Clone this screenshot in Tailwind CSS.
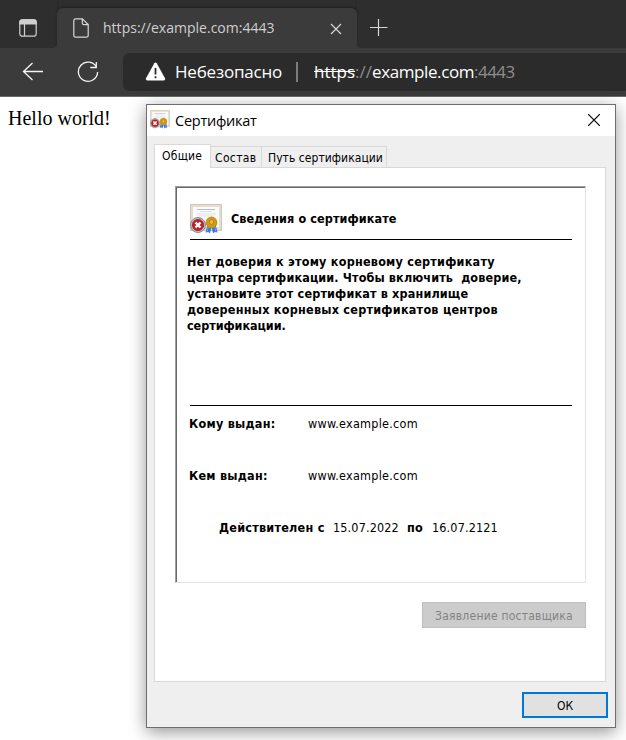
<!DOCTYPE html>
<html lang="ru">
<head>
<meta charset="utf-8">
<title>https://example.com:4443</title>
<script src="https://cdn.jsdelivr.net/npm/@tailwindcss/browser@4"></script>
</head>
<body class="relative h-[740px] w-[626px] overflow-hidden bg-white">
<svg class="hidden">
  <symbol id="cert" viewBox="0 0 32 32">
    <rect x="0.5" y="0.5" width="31" height="26" fill="#e4ddd0" stroke="#cfc7b9"/>
    <rect x="3" y="3" width="26" height="20" fill="#fcfbf9"/>
    <path d="M7 5.500h18" stroke="#b4bbdc"/>
    <path d="M10 7.500h12M6 10h20M8 12h16" stroke="#dfe1ed"/>
    <path d="M17.500 20l-2 8.500 2.800-.500 1.700 1.500 1.500-7zM25.500 20l2 8.500-2.800-.500-1.700 1.500-1.500-7z" fill="#3478e0"/>
    <path d="M18.200 23l-1 4.500M24.800 23l1 4.500" stroke="#71a9f5"/>
    <circle cx="21.500" cy="18.500" r="5.700" fill="#d19a17"/>
    <circle cx="21.500" cy="18.500" r="5.300" fill="none" stroke="#c0870c" stroke-width=".8"/>
    <circle cx="21.500" cy="18" r="2.300" fill="#e6bb45" stroke="#b07c10" stroke-width=".8"/>
    <circle cx="8" cy="21" r="7.500" fill="#bdbdbd" stroke="#8b8b8b"/>
    <circle cx="8" cy="21" r="5.600" fill="#c5202a" stroke="#98202a" stroke-width=".8"/>
    <path d="M5.500 18.500l5 5M10.500 18.500l-5 5" stroke="#fff" stroke-width="2.400"/>
  </symbol>
</svg>

<header class="h-[97px] border-b border-[#6a6a6a] bg-[#3b3b3b] font-['Open_Sans','Noto_Sans',sans-serif]">
  <div class="flex h-12 bg-[linear-gradient(#2e2e2e_20px,#3b3b3b_20px)]">
    <div class="h-12 w-[57px] shrink-0 rounded-br-md bg-[#2e2e2e] pt-[19px] pl-[19px] shadow-[0_0_2px_#202020]">
      <svg width="18" height="18" viewBox="0 0 18 18" fill="none" stroke="#cfcfcf" stroke-width="1.200"><path d="M.8 5V3.300A2.500 2.500 0 0 1 3.300.8h11.400a2.500 2.500 0 0 1 2.500 2.500V5z" fill="#cfcfcf"/><rect x=".8" y=".8" width="16.400" height="16.400" rx="2.500"/><path d="M5.500 5v12"/></svg>
    </div>
    <div class="relative mt-2 flex h-10 w-[300px] shrink-0 items-start rounded-t-md bg-[#3b3b3b] shadow-[0_-1px_2px_#202020]">
      <svg class="mt-[10px] ml-4 shrink-0" width="16" height="20" viewBox="0 0 16 20" fill="none" stroke="#d6d6d6" stroke-width="1.200"><path d="M2.600.8h6.800l5.800 5.800v10.800a1.800 1.800 0 0 1-1.800 1.800H2.600a1.800 1.800 0 0 1-1.800-1.800V2.600A1.800 1.800 0 0 1 2.600.8z"/><path d="M9.300.8v4.300q0 1.600 1.600 1.600h4.300"/></svg>
      <span class="mt-[9px] ml-[14px] text-[14px] leading-[22px] tracking-[0.02px] whitespace-pre text-[#cfcfcf]">https://example.com:4443</span>
      <svg class="mt-[15px] mr-[15px] ml-auto" width="12" height="12" stroke="#d6d6d6" stroke-width="1.200"><path d="M1 1l10 10M11 1L1 11"/></svg>
    </div>
    <div class="h-12 grow rounded-bl-md bg-[#2e2e2e] pt-[19px] pl-[13px] shadow-[0_0_2px_#202020]">
      <svg width="18" height="18" stroke="#d6d6d6" stroke-width="1.200"><path d="M8.500 0v17M0 8.500h17.500"/></svg>
    </div>
  </div>
  <div class="relative flex h-12 items-start bg-[#3b3b3b]">
    <svg class="mt-[14px] ml-[22px]" width="22" height="19" fill="none" stroke="#f4f4f4" stroke-width="1.300"><path d="M1 9.500h20M10.500 1L1.500 9.500l9 8.500"/></svg>
    <svg class="mt-[13px] ml-[33px]" width="22" height="22" fill="none" stroke="#f4f4f4" stroke-width="1.300"><path d="M19.500 6.200A9.600 9.600 0 1 0 20.600 11M19.300 1v5.500h-6"/></svg>
    <div class="mt-[5px] ml-6 flex h-[38px] w-[503px] items-start rounded-l-md bg-[#2b2b2b] text-[17px] leading-[24px] text-white">
      <svg class="mt-[9px] ml-[22px] shrink-0" width="21" height="19"><path d="M9.300 1.200q1.200-1.600 2.400 0l8.300 15q.7 2-1.300 2.200H2.300q-2-.2-1.300-2.200z" fill="#fff"/><path d="M10.500 6v6.500M10.500 14.300v2" stroke="#2b2b2b" stroke-width="1.800"/></svg>
      <span class="mt-[7px] ml-[9px] w-[110px] shrink-0 tracking-[-0.2px] whitespace-pre">Небезопасно</span>
      <span class="mt-[9px] ml-[11px] h-5 w-[2px] bg-[#7c7c7c]"></span>
      <span class="mt-[7px] ml-[16px] whitespace-pre"><s>https</s><span class="text-[#8d8d8d]">://</span><span class="tracking-[-0.4px]">example.com</span><span class="tracking-[-0.55px] text-[#8d8d8d]">:4443</span></span>
    </div>
  </div>
</header>

<p class="pt-[9px] pl-2 font-['Liberation_Serif',serif] text-[20px] leading-[25px] text-black">Hello world!</p>

<div class="absolute top-[104px] left-[146px] flex h-[624px] w-[470px] flex-col border border-[#6e6e6e] bg-[#efefef] font-['DejaVu_Sans_Condensed','DejaVu_Sans',sans-serif] text-[12px] leading-4 text-black shadow-[0_4px_16px_rgba(0,0,0,.42)]">
  <div class="flex h-[31px] shrink-0 items-start bg-white">
    <svg class="mt-[5px] ml-[3px]" width="20" height="20"><use href="#cert"/></svg>
    <span class="mt-[5px] ml-[5px] font-['Open_Sans','Noto_Sans',sans-serif] text-[14.5px] leading-[22px] tracking-[-0.25px] whitespace-pre">Сертификат</span>
    <svg class="mt-[9px] mr-[15px] ml-auto" width="12" height="12" stroke="#000" stroke-width="1.200"><path d="M0 0l12 12M12 0L0 12"/></svg>
  </div>
  <div class="relative z-10 ml-[7px] flex h-8 shrink-0 items-end">
    <div class="h-[24px] w-[57px] border border-b-0 border-[#d9d9d9] bg-white pt-[3px] pl-[7px] tracking-[0.25px] whitespace-pre">Общие</div>
    <div class="h-[22px] w-[51px] border-t border-r border-b border-[#d9d9d9] pt-[3px] pl-[4px] tracking-[0.35px] whitespace-pre">Состав</div>
    <div class="h-[22px] w-[125px] border-t border-r border-b border-[#d9d9d9] pt-[3px] pl-[6px] tracking-[0.05px] whitespace-pre">Путь сертификации</div>
  </div>
  <div class="-mt-px ml-[7px] flex h-[515px] w-[452px] shrink-0 flex-col border border-[#d9d9d9] bg-white pt-[18px] pl-5">
    <div class="h-[397px] w-[411px] shrink-0 border-t border-r border-b border-l border-t-[#a0a0a0] border-r-[#e3e3e3] border-b-[#e3e3e3] border-l-[#a0a0a0]">
      <div class="h-full border-t border-l border-[#696969] pl-[10px] text-[12.5px]">
        <div class="ml-[3px] flex h-[52px] w-[382px] items-start border-b border-black">
          <svg class="mt-[16px]" width="32" height="32"><use href="#cert"/></svg>
          <b class="mt-[23px] ml-[9px] tracking-[0.1px] whitespace-pre">Сведения о сертификате</b>
        </div>
        <div class="mt-[14px] h-[151px] font-bold">
          <div class="tracking-[0.24px] whitespace-pre">Нет доверия к этому корневому сертификату</div>
          <div class="tracking-[0.13px] whitespace-pre">центра сертификации. Чтобы включить  доверие,</div>
          <div class="tracking-[0.16px] whitespace-pre">установите этот сертификат в хранилище</div>
          <div class="tracking-[0.25px] whitespace-pre">доверенных корневых сертификатов центров</div>
          <div class="tracking-[-0.05px] whitespace-pre">сертификации.</div>
        </div>
        <div class="ml-[3px] h-px w-[382px] bg-black"></div>
        <dl class="mt-[10px] ml-[2px] grid grid-cols-[119px_1fr] gap-y-9 tracking-[0.26px]">
          <dt class="font-bold">Кому выдан:</dt><dd>www.example.com</dd>
          <dt class="font-bold">Кем выдан:</dt><dd>www.example.com</dd>
        </dl>
        <div class="mt-9 ml-[32px] flex tracking-[0.15px]"><b class="w-[114px] tracking-[0.25px] whitespace-pre">Действителен с</b><span class="w-[74px]">15.07.2022</span><b class="w-[25px]">по</b><span>16.07.2121</span></div>
      </div>
    </div>
    <button class="mt-[19px] ml-[247px] h-[26px] w-[164px] border border-[#bfbfbf] bg-[#cccccc] pt-px tracking-[0.23px] whitespace-pre text-[#838383]">Заявление поставщика</button>
  </div>
  <button class="mt-[10px] mr-[7px] ml-auto h-[26px] w-[86px] border-2 border-[#0078d7] bg-[#e1e1e1] pt-px">ОК</button>
</div>
</body>
</html>
